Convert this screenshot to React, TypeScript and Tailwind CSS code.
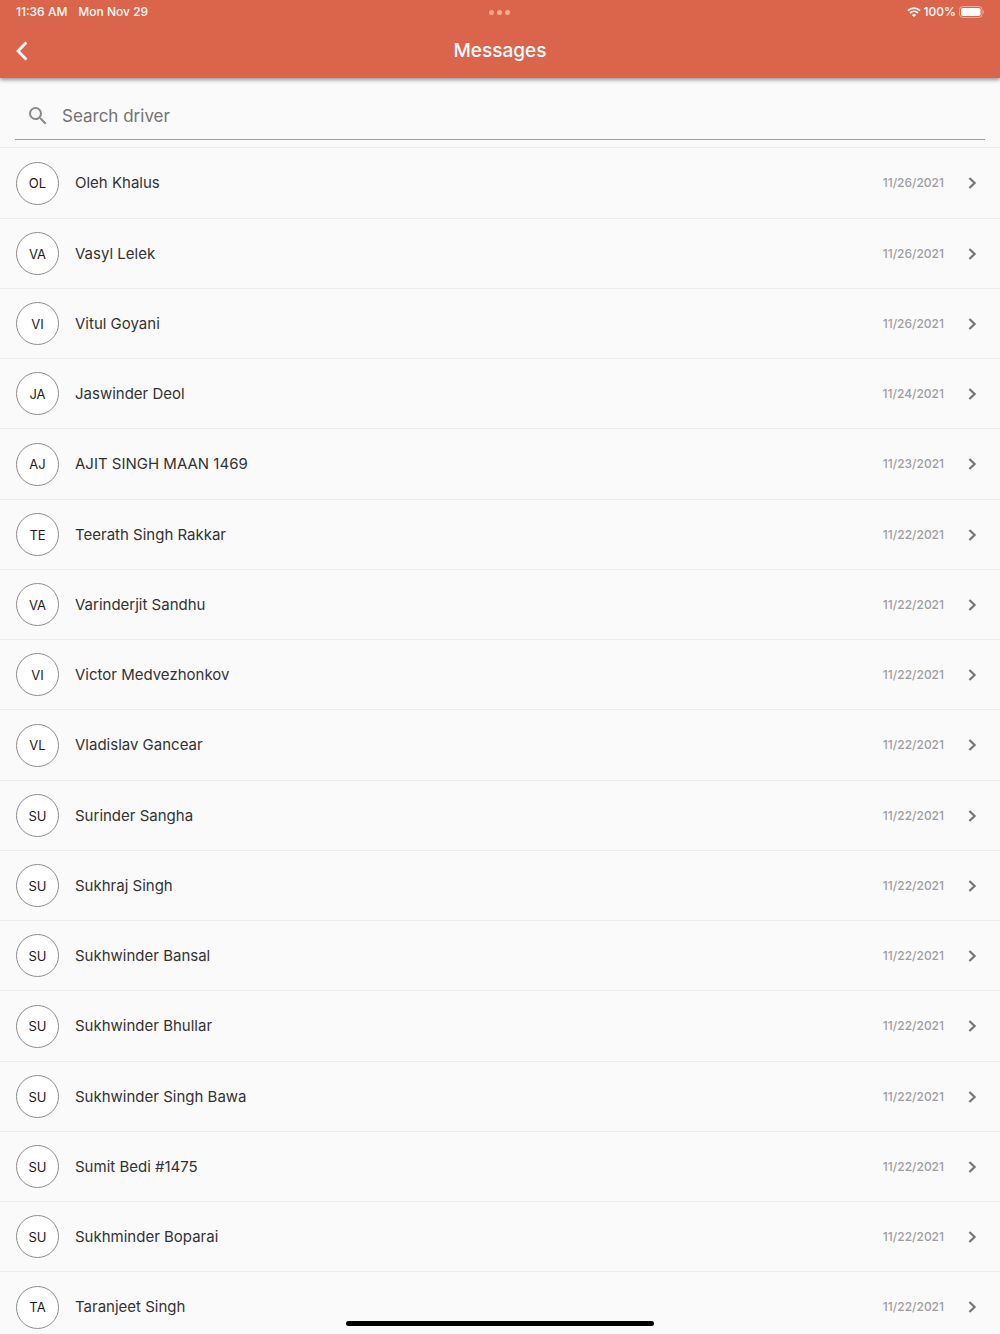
import React from 'react';

type Driver = { initials: string; name: string; date: string };

const drivers: Driver[] = [
  { initials: 'OL', name: 'Oleh Khalus', date: '11/26/2021' },
  { initials: 'VA', name: 'Vasyl Lelek', date: '11/26/2021' },
  { initials: 'VI', name: 'Vitul Goyani', date: '11/26/2021' },
  { initials: 'JA', name: 'Jaswinder Deol', date: '11/24/2021' },
  { initials: 'AJ', name: 'AJIT SINGH MAAN 1469', date: '11/23/2021' },
  { initials: 'TE', name: 'Teerath Singh Rakkar', date: '11/22/2021' },
  { initials: 'VA', name: 'Varinderjit Sandhu', date: '11/22/2021' },
  { initials: 'VI', name: 'Victor Medvezhonkov', date: '11/22/2021' },
  { initials: 'VL', name: 'Vladislav Gancear', date: '11/22/2021' },
  { initials: 'SU', name: 'Surinder Sangha', date: '11/22/2021' },
  { initials: 'SU', name: 'Sukhraj Singh', date: '11/22/2021' },
  { initials: 'SU', name: 'Sukhwinder Bansal', date: '11/22/2021' },
  { initials: 'SU', name: 'Sukhwinder Bhullar', date: '11/22/2021' },
  { initials: 'SU', name: 'Sukhwinder Singh Bawa', date: '11/22/2021' },
  { initials: 'SU', name: 'Sumit Bedi #1475', date: '11/22/2021' },
  { initials: 'SU', name: 'Sukhminder Boparai', date: '11/22/2021' },
  { initials: 'TA', name: 'Taranjeet Singh', date: '11/22/2021' },
];

const WifiIcon = () => (
  <svg width="14" height="10" viewBox="0 0 14 10" fill="none" stroke="white" strokeWidth="1.8" aria-hidden="true">
    <path d="M0.9 3.7C4.4 0.3 9.6 0.3 13.1 3.7" />
    <path d="M3 6C5.3 3.8 8.7 3.8 11 6" />
    <path d="M7 10L4.9 7.9C6.1 6.8 7.9 6.8 9.1 7.9Z" fill="white" stroke="none" />
  </svg>
);

const BatteryIcon = () => (
  <svg width="26" height="12" viewBox="0 0 26 12" fill="none" aria-hidden="true">
    <rect x="0.5" y="0.5" width="22.5" height="11" rx="3.2" stroke="white" strokeOpacity="0.45" />
    <rect x="2" y="2" width="19.5" height="8" rx="1.8" fill="white" />
    <path d="M24.2 4.2C25.4 4.7 25.4 7.3 24.2 7.8Z" fill="white" fillOpacity="0.5" />
  </svg>
);

const StatusBar = () => (
  <div className="grid grid-cols-3 items-center h-6 px-4 text-xs font-medium">
    <div className="flex gap-[11px]">
      <span>11:36 AM</span>
      <span>Mon Nov 29</span>
    </div>
    <div className="flex justify-center gap-[3px]">
      <span className="w-[5px] h-[5px] rounded-full bg-[#ffab91]" />
      <span className="w-[5px] h-[5px] rounded-full bg-[#ffab91]" />
      <span className="w-[5px] h-[5px] rounded-full bg-[#ffab91]" />
    </div>
    <div className="flex items-center justify-end gap-[3px] -mr-px">
      <WifiIcon />
      <span>100%</span>
      <BatteryIcon />
    </div>
  </div>
);

const DriverRow = ({ driver }: { driver: Driver }) => (
  <li className="h-[70px] nth-[4n+1]:h-[71px] shrink-0 border-t border-[#ececec]">
    <button type="button" className="flex items-center w-full h-full px-4 text-left">
      <span className="flex items-center justify-center w-[43px] h-[43px] rounded-full border border-[#8c8c8c] bg-white text-[13px] leading-5 text-[#1c1c1c]">
        {driver.initials}
      </span>
      <span className="flex-1 ml-4 truncate text-[15px] leading-5 text-[#333333]">{driver.name}</span>
      <span className="text-xs leading-5 font-medium text-[#9e9e9e]">{driver.date}</span>
      <svg className="ml-4" width="24" height="24" viewBox="0 0 24 24" fill="none" stroke="#757575" strokeWidth="2.2" aria-hidden="true">
        <path d="M9.4 7L14.6 12L9.4 17" />
      </svg>
    </button>
  </li>
);

export default function App() {
  return (
    <div className="relative flex flex-col h-screen overflow-hidden bg-[#fafafa] font-['Inter','Liberation_Sans',sans-serif]">
      <header className="relative z-10 shrink-0 bg-[#da654a] text-white shadow-[0_2px_4px_rgba(0,0,0,0.4)]">
        <StatusBar />
        <div className="grid grid-cols-[1fr_auto_1fr] items-center h-[54px] px-2">
          <button type="button" aria-label="Back" className="w-7 h-7 flex items-center justify-center">
            <svg width="12" height="20" viewBox="0 0 12 20" fill="none" stroke="white" strokeWidth="2.8">
              <path d="M10.4 1.4L2 10L10.4 18.6" />
            </svg>
          </button>
          <h1 className="text-[19px] leading-7 font-medium">Messages</h1>
        </div>
      </header>

      <label className="flex items-center shrink-0 h-[62px] mx-[15px] mb-[7px] pt-[14px] pl-[11px] border-b border-[#a0a0a0]">
        <svg width="24" height="24" viewBox="0 0 24 24" fill="#8a8a8a" aria-hidden="true">
          <path d="M15.5 14h-.79l-.28-.27A6.47 6.47 0 0 0 16 9.5 6.5 6.5 0 1 0 9.5 16c1.61 0 3.09-.59 4.23-1.57l.27.28v.79l5 4.99L20.49 19l-4.99-5zm-6 0C7.01 14 5 11.99 5 9.5S7.01 5 9.5 5 14 7.01 14 9.5 11.99 14 9.5 14z" />
        </svg>
        <input
          type="text"
          aria-label="Search driver"
          placeholder="Search driver"
          className="flex-1 ml-3 bg-transparent outline-none text-[17px] leading-6 text-[#333333] placeholder:text-[#737373]"
        />
      </label>

      <ul className="flex flex-col flex-1 min-h-0 overflow-y-auto [scrollbar-width:none]">
        {drivers.map((driver) => (
          <DriverRow key={driver.name} driver={driver} />
        ))}
      </ul>

      {/* home indicator floats over the list */}
      <div className="absolute bottom-2 left-1/2 -translate-x-1/2 w-[308px] h-[5px] rounded-full bg-black" />
    </div>
  );
}
